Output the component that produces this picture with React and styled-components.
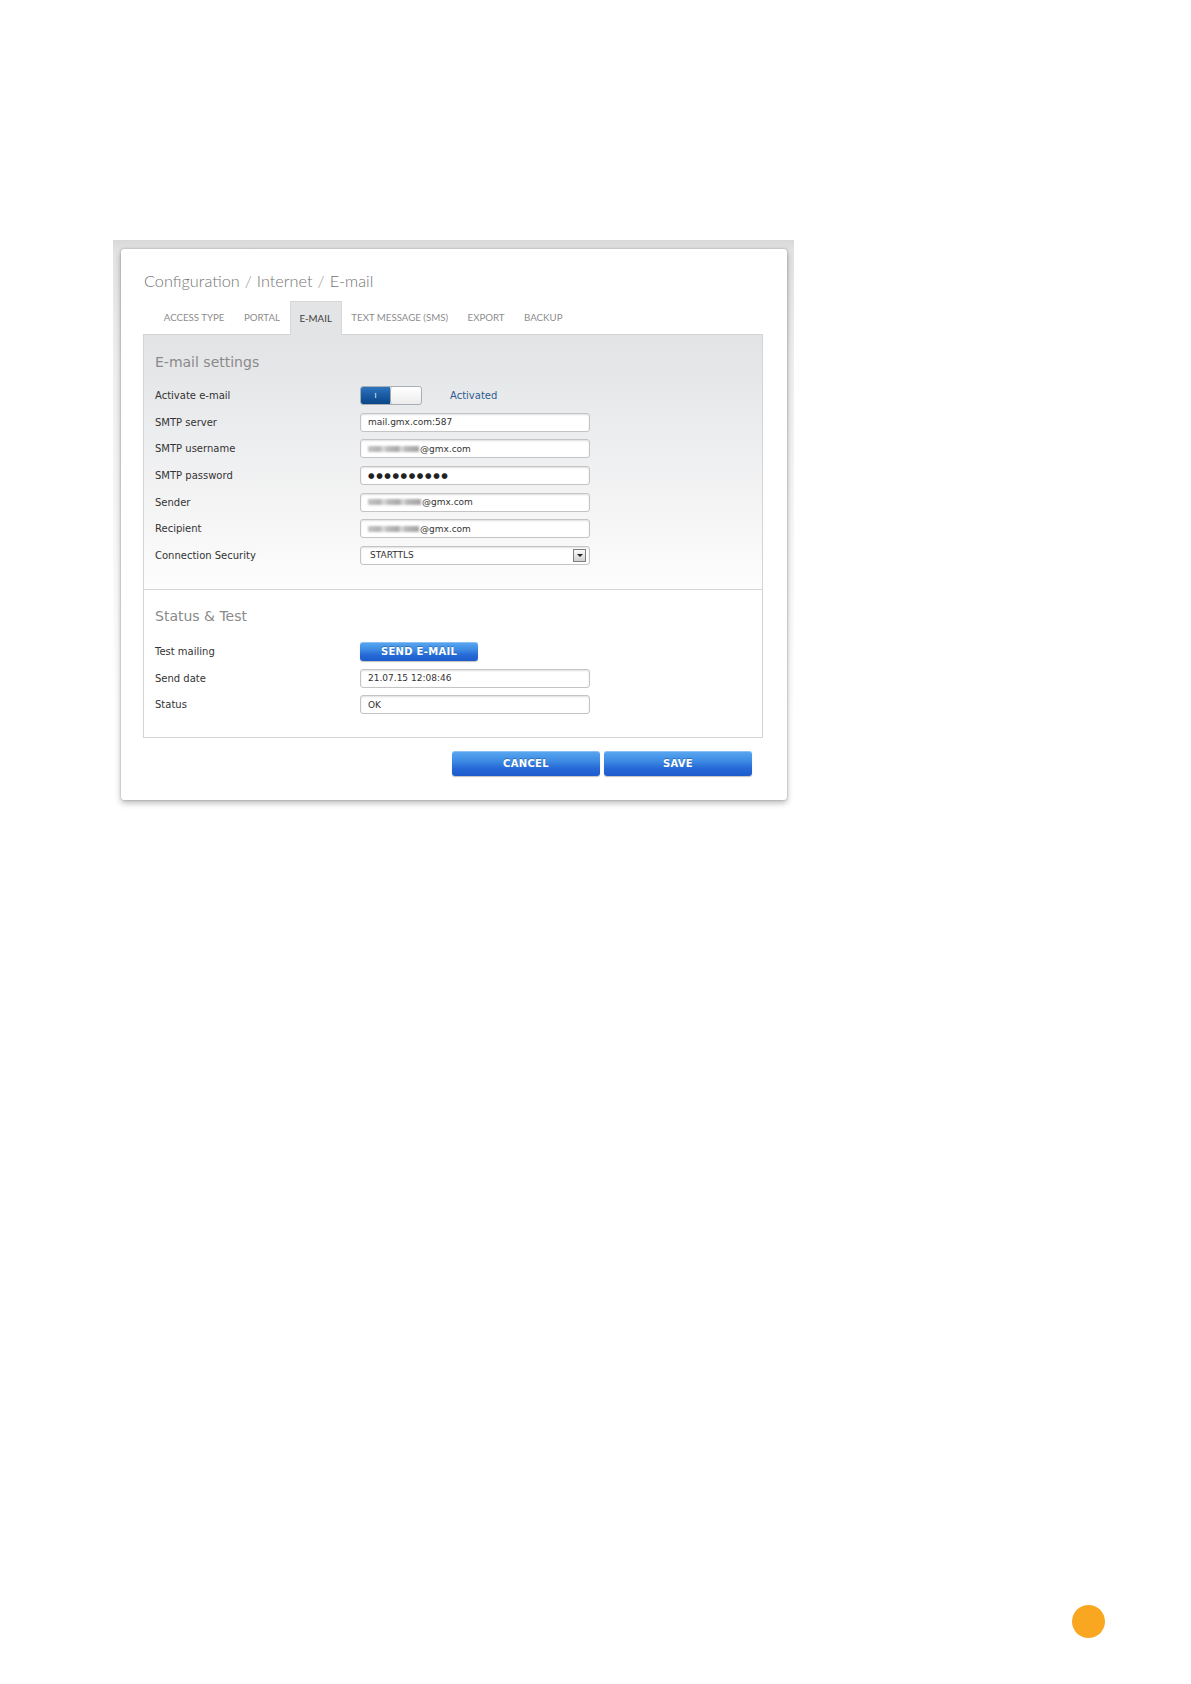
import React from "react";
import styled, { createGlobalStyle, css } from "styled-components";

const Global = createGlobalStyle`
  html, body { margin: 0; padding: 0; background: #fff; }
  body { font-family: "DejaVu Sans", Verdana, sans-serif; }
  * { box-sizing: border-box; }
`;

const Page = styled.div`
  width: 1191px;
  height: 1684px;
  display: flex;
  flex-direction: column;
  padding-top: 240px;
  padding-left: 113px;
`;

const Frame = styled.div`
  width: 681px;
  padding: 9px 7px 0 8px;
  background: linear-gradient(to bottom, #d9d9d9 0px, #e3e3e3 12px, #efefef 120px, #f8f8f8 300px, #fff 480px);
`;

const Card = styled.div`
  background: #fff;
  border-radius: 3px;
  padding: 22px 24px 24px 22px;
  box-shadow: 0 0 2px rgba(0, 0, 0, 0.3), 0 3px 6px rgba(0, 0, 0, 0.28);
`;

const Breadcrumb = styled.div`
  font-family: Lato, "Open Sans", sans-serif;
  font-weight: 300;
  font-size: 16.3px;
  line-height: 20px;
  color: #737373;
  padding-left: 1px;
  margin-bottom: 10px;
`;

const Sep = styled.span`
  color: #9a9a9a;
  margin: 0 5px;
`;

const Tabs = styled.div`
  display: flex;
  height: 33px;
  padding-left: 11px;
  position: relative;
  z-index: 1;
`;

const Tab = styled.div`
  display: flex;
  align-items: center;
  padding: 0 9.75px 1px;
  font-family: Lato, "Open Sans", sans-serif;
  font-size: 9.7px;
  text-transform: uppercase;
  color: #8d8d8d;
  ${(p) =>
    p.$active &&
    css`
      background: #e3e4e6;
      color: #3c3c3c;
      border: 1px solid #d6d7d9;
      border-bottom: none;
      margin-bottom: -1px;
      padding: 0 8.75px 1px;
    `}
`;

const Panel = styled.div`
  border: 1px solid #d3d4d6;
`;

const Section = styled.div`
  padding: ${(p) => p.$pt}px 12px ${(p) => p.$pb}px 11px;
  background: ${(p) => p.$bg};
  & + & {
    border-top: 1px solid #d6d6d6;
  }
`;

const Heading = styled.div`
  font-size: 14px;
  line-height: 18px;
  color: #8a8a8a;
  margin-bottom: ${(p) => p.$mb}px;
`;

const Grid = styled.div`
  display: grid;
  grid-template-columns: 205px 230px;
  grid-auto-rows: 19px;
  row-gap: 7.67px;
  align-items: center;
`;

const Label = styled.div`
  font-size: 10px;
  color: #333;
  line-height: 19px;
`;

const Field = styled.div`
  height: 19px;
  border: 1px solid #c4c4c4;
  border-radius: 3px;
  background: #fff;
  box-shadow: inset 0 1px 2px rgba(0, 0, 0, 0.13);
  padding: 0 3px 0 ${(p) => p.$pl || 7}px;
  font-size: 9px;
  color: #333;
  display: flex;
  align-items: center;
  white-space: nowrap;
`;

const Dots = styled.span`
  font-size: 7.5px;
  letter-spacing: 1.6px;
  color: #222;
`;

const Redact = styled.span`
  display: inline-block;
  width: ${(p) => p.$w}px;
  height: 6px;
  margin-right: 1px;
  background: linear-gradient(
    90deg,
    #c4c4c4 0%,
    #b3b3b3 22%,
    #dcdcdc 30%,
    #bcbcbc 38%,
    #a9a9a9 58%,
    #dadada 66%,
    #b8b8b8 74%,
    #a5a5a5 100%
  );
  filter: blur(1.1px);
`;

const ControlCell = styled.div`
  display: flex;
  align-items: center;
  width: 300px;
`;

const Toggle = styled.div`
  display: flex;
  width: 62px;
  height: 19px;
  border-radius: 3px;
  border: 1px solid #a7adb5;
  overflow: hidden;
  background: linear-gradient(to bottom, #ffffff, #e6e6e6);
`;

const ToggleOn = styled.div`
  width: 29px;
  background: linear-gradient(to bottom, #2f74be 0%, #195ba3 50%, #0b4688 100%);
  color: #fff;
  font-size: 7px;
  display: flex;
  align-items: center;
  justify-content: center;
`;

const Knob = styled.div`
  flex: 1;
  border-left: 1px solid #a0a6ae;
  border-radius: 3px;
  background: linear-gradient(to bottom, #ffffff, #ececec);
`;

const StateText = styled.span`
  margin-left: 28px;
  font-size: 10px;
  color: #2d5d90;
`;

const SelectArrow = styled.span`
  margin-left: auto;
  width: 13px;
  height: 13px;
  border: 1px solid #7d7d7d;
  background: linear-gradient(to bottom, #fbfbfb, #d0d0d0);
  display: flex;
  align-items: center;
  justify-content: center;
  &::after {
    content: "";
    border-left: 3px solid transparent;
    border-right: 3px solid transparent;
    border-top: 3px solid #222;
  }
`;

const BlueButton = styled.button`
  border: none;
  border-radius: 3px;
  width: ${(p) => p.$w}px;
  height: ${(p) => p.$h}px;
  padding: 0;
  background: linear-gradient(to bottom, #5aa8f0 0%, #3d8be4 40%, #2568d6 70%, #1d5bcb 100%);
  color: #fff;
  font-family: "DejaVu Sans", Verdana, sans-serif;
  font-weight: bold;
  font-size: 10px;
  letter-spacing: 0.3px;
  text-transform: uppercase;
  text-shadow: 0 -1px 0 rgba(0, 0, 0, 0.25);
  box-shadow: inset 0 1px 0 rgba(255, 255, 255, 0.3), 0 1px 1px rgba(0, 0, 0, 0.25);
  cursor: pointer;
`;

const Actions = styled.div`
  display: flex;
  justify-content: flex-end;
  gap: 4px;
  margin-top: 13px;
  padding-right: 11px;
`;

const Spacer = styled.div`
  flex: 1;
`;

const DotRow = styled.div`
  display: flex;
  justify-content: flex-end;
  padding: 0 86px 46px 0;
`;

const OrangeDot = styled.div`
  width: 33px;
  height: 33px;
  border-radius: 50%;
  background: #f9a620;
`;

const tabs = ["Access type", "Portal", "E-mail", "Text message (SMS)", "Export", "Backup"];

export default function App() {
  return (
    <>
      <Global />
      <Page>
        <Frame>
          <Card>
            <Breadcrumb>
              Configuration<Sep>/</Sep>Internet<Sep>/</Sep>E-mail
            </Breadcrumb>
            <Tabs>
              {tabs.map((t) => (
                <Tab key={t} $active={t === "E-mail"}>
                  {t}
                </Tab>
              ))}
            </Tabs>
            <Panel>
              <Section
                $pt={18}
                $pb={24}
                $bg="linear-gradient(to bottom, #e2e3e5 0%, #ebecee 35%, #f6f6f6 75%, #fdfdfd 100%)"
              >
                <Heading $mb={15}>E-mail settings</Heading>
                <Grid>
                  <Label>Activate e-mail</Label>
                  <ControlCell>
                    <Toggle>
                      <ToggleOn>I</ToggleOn>
                      <Knob />
                    </Toggle>
                    <StateText>Activated</StateText>
                  </ControlCell>
                  <Label>SMTP server</Label>
                  <Field>mail.gmx.com:587</Field>
                  <Label>SMTP username</Label>
                  <Field>
                    <Redact $w={51} />@gmx.com
                  </Field>
                  <Label>SMTP password</Label>
                  <Field>
                    <Dots>●●●●●●●●●●</Dots>
                  </Field>
                  <Label>Sender</Label>
                  <Field>
                    <Redact $w={53} />@gmx.com
                  </Field>
                  <Label>Recipient</Label>
                  <Field>
                    <Redact $w={51} />@gmx.com
                  </Field>
                  <Label>Connection Security</Label>
                  <Field $pl={9}>
                    STARTTLS
                    <SelectArrow />
                  </Field>
                </Grid>
              </Section>
              <Section $pt={17} $pb={23} $bg="#fff">
                <Heading $mb={17}>Status &amp; Test</Heading>
                <Grid>
                  <Label>Test mailing</Label>
                  <ControlCell>
                    <BlueButton $w={118} $h={19}>Send E-mail</BlueButton>
                  </ControlCell>
                  <Label>Send date</Label>
                  <Field>21.07.15 12:08:46</Field>
                  <Label>Status</Label>
                  <Field>OK</Field>
                </Grid>
              </Section>
            </Panel>
            <Actions>
              <BlueButton $w={148} $h={25}>Cancel</BlueButton>
              <BlueButton $w={148} $h={25}>Save</BlueButton>
            </Actions>
          </Card>
        </Frame>
        <Spacer />
        <DotRow>
          <OrangeDot />
        </DotRow>
      </Page>
    </>
  );
}
